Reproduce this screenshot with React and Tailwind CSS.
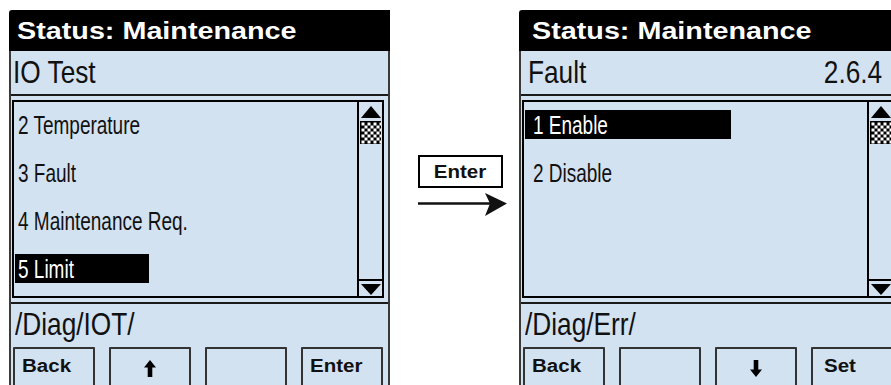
import React from 'react';

const sans = "font-['Liberation_Sans',Arial,sans-serif]";
// Arial Narrow look: Liberation Sans squeezed horizontally
const narrow = `inline-block whitespace-nowrap scale-x-[0.82] ${sans}`;
const narrower = `inline-block whitespace-nowrap scale-x-[0.73] ${sans}`;

function UpTriangle() {
  return (
    <svg width="20" height="12" viewBox="0 0 20 12">
      <polygon points="10,0 20,12 0,12" fill="#000" />
    </svg>
  );
}

function DownTriangle() {
  return (
    <svg width="20" height="11" viewBox="0 0 20 11">
      <polygon points="0,0 20,0 10,11" fill="#000" />
    </svg>
  );
}

function Thumb() {
  const cells = [];
  for (let y = 0; y < 7; y++) {
    for (let x = 0; x < 7; x++) {
      if ((x + y) % 2 === 0) cells.push(<rect key={x + '-' + y} x={1.5 + x * 3} y={1.5 + y * 3} width="3" height="3" fill="#fff" />);
    }
  }
  return (
    <svg width="21" height="23" viewBox="0 0 21 23">
      <rect width="21" height="23" fill="#000" />
      {cells}
    </svg>
  );
}

function ArrowIcon({ down }) {
  return (
    <svg width="12" height="17" viewBox="0 0 12 17" className={down ? 'rotate-180' : ''}>
      <polygon points="6,0 12,7.5 8.3,7.5 8.3,17 3.7,17 3.7,7.5 0,7.5" fill="#000" />
    </svg>
  );
}

function Panel({ title, version, items, selected, path, buttons, indent, hlWidth }) {
  return (
    <div className="shrink-0 w-[381px] flex flex-col">
      <div className="h-[41px] shrink-0 bg-black rounded-tl-[3px] flex items-center pt-[2px]" style={{ paddingLeft: 8 + indent }}>
        <span className={`inline-block whitespace-nowrap origin-left scale-x-[1.25] text-[23px] font-bold text-white leading-none ${sans}`}>
          Status: Maintenance
        </span>
      </div>
      <div className="flex-1 bg-[#d3e2f1] border-x-2 border-[#3a3a3a] flex flex-col">
        <div className="h-[45px] shrink-0 border-b-2 border-[#1a1a1a] flex items-center justify-between pr-[16px] pb-[2px] text-[32px] leading-none text-[#111]" style={{ paddingLeft: 2 + indent }}>
          <span className={`origin-left ${narrow}`}>{title}</span>
          {version && <span className={`origin-right ${narrow}`}>{version}</span>}
        </div>

        <div className="mt-[4px] ml-[1px] mr-[4px] h-[198px] shrink-0 border-2 border-black flex">
          <div className="flex-1 pt-[8px] flex flex-col gap-[19px]">
            {items.map((item, i) => (
              <div
                key={item}
                className={`ml-[1px] h-[29px] shrink-0 leading-[29px] text-[26px] ${i === selected ? 'bg-black text-white' : 'text-[#111]'}`}
                style={{ width: hlWidth, paddingLeft: 3 + indent }}
              >
                <span className={`origin-left ${narrower}`}>{item}</span>
              </div>
            ))}
          </div>
          <div className="w-[25px] border-l-2 border-black flex flex-col items-center">
            <div className="mt-[4px] h-[12px]"><UpTriangle /></div>
            <div className="mt-[3px] h-[23px]"><Thumb /></div>
            <div className="flex-1" />
            <div className="w-full h-[17px] border-t-2 border-black flex justify-center pt-[3px]">
              <DownTriangle />
            </div>
          </div>
        </div>

        <div className="mt-[4px] border-t-2 border-[#1a1a1a] h-[46px] shrink-0 pl-[4px] pt-[3px] text-[32px] leading-none text-[#111]">
          <span className={`origin-left ${narrow}`}>{path}</span>
        </div>

        <div className="flex gap-[14px] pl-[2px] -mt-[1px]">
          {buttons.map((b, i) => (
            <div key={i} className="w-[82px] h-[60px] shrink-0 border-2 border-[#333] rounded-[1px]">
              {b.label && (
                <div className="pt-[5px]" style={{ paddingLeft: b.pl || 7 }}>
                  <span className={`inline-block origin-left scale-x-[1.14] text-[18px] font-bold leading-none text-[#111] ${sans}`}>
                    {b.label}
                  </span>
                </div>
              )}
              {b.icon && (
                <div className="flex justify-center pt-[11px]">
                  <ArrowIcon down={b.icon === 'down'} />
                </div>
              )}
            </div>
          ))}
        </div>
      </div>
    </div>
  );
}

export default function App() {
  return (
    <div className="w-[891px] h-[385px] overflow-hidden bg-white flex pt-[10px] pl-[9px]">
      <Panel
        title="IO Test"
        items={['2 Temperature', '3 Fault', '4 Maintenance Req.', '5 Limit']}
        selected={3}
        path="/Diag/IOT/"
        indent={0}
        hlWidth={134}
        buttons={[{ label: 'Back' }, { icon: 'up' }, {}, { label: 'Enter' }]}
      />

      <div className="w-[129px] shrink-0 pl-[28px] pt-[145px]">
        <div className="w-[85px] h-[33px] border-2 border-black flex items-center justify-center">
          <span className={`inline-block scale-x-[1.14] text-[18px] font-bold leading-none text-[#111] ${sans}`}>Enter</span>
        </div>
        <svg width="90" height="24" viewBox="0 0 90 24" className="mt-[5px]">
          <line x1="0" y1="10.5" x2="74" y2="10.5" stroke="#111" strokeWidth="2.5" />
          <polygon points="67,0 89,10.5 67,23 72,10.5" fill="#111" />
        </svg>
      </div>

      <Panel
        title="Fault"
        version="2.6.4"
        items={['1 Enable', '2 Disable']}
        selected={0}
        path="/Diag/Err/"
        indent={5}
        hlWidth={206}
        buttons={[{ label: 'Back' }, {}, { icon: 'down' }, { label: 'Set', pl: 11 }]}
      />
    </div>
  );
}
